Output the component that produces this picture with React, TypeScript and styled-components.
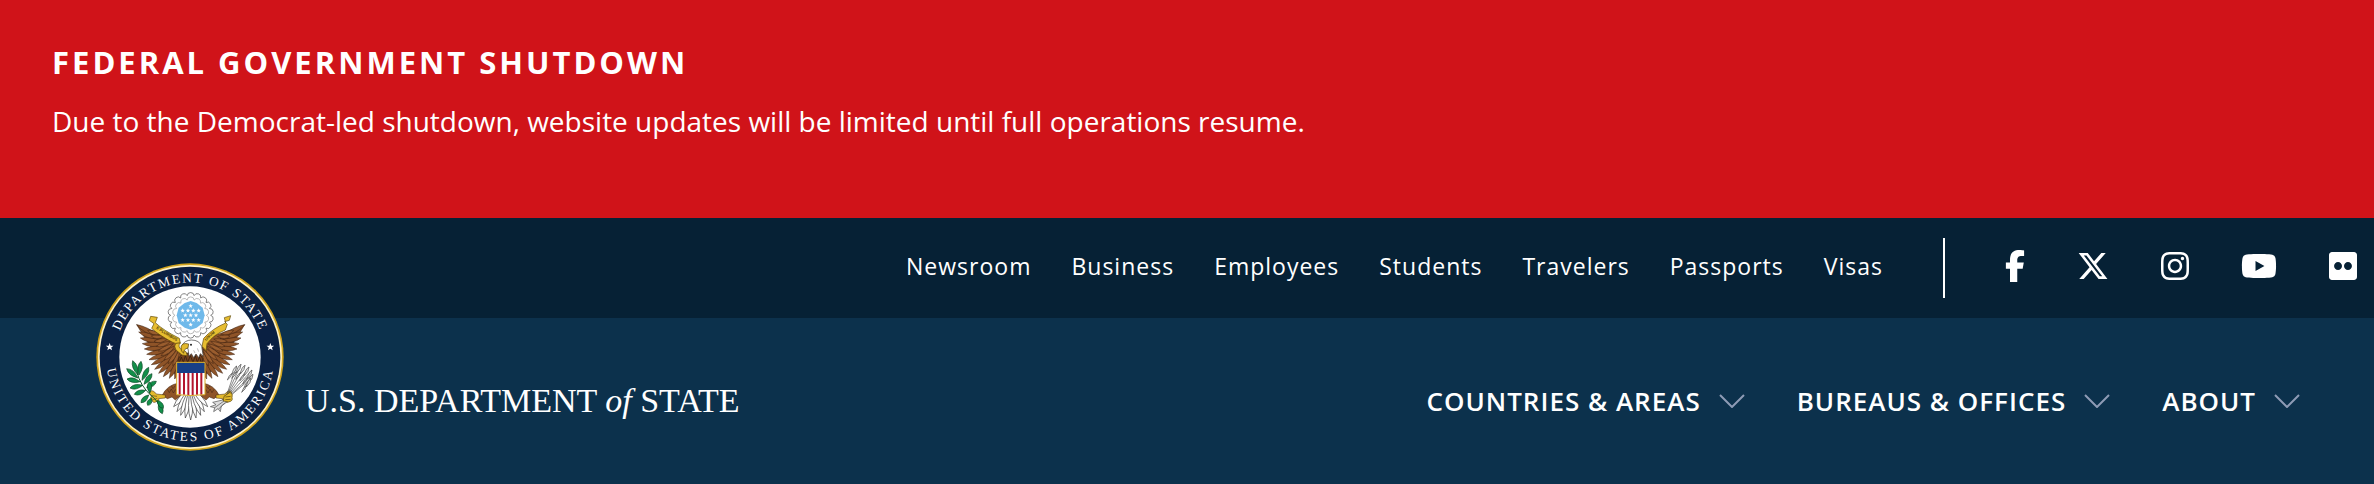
import React from "react";
import styled, { createGlobalStyle } from "styled-components";
import { FaFacebookF, FaXTwitter, FaInstagram, FaYoutube, FaFlickr } from "react-icons/fa6";

const GlobalStyle = createGlobalStyle`
  *, *::before, *::after { box-sizing: border-box; }
  body {
    margin: 0;
    background: #0c314c;
    color: #fff;
    font-family: "Open Sans", "Noto Sans", sans-serif;
  }
`;

const Alert = styled.section`
  background: #d01319;
  padding: 40px 52px 76px;
`;

const AlertTitle = styled.h2`
  margin: 0;
  font-size: 31px;
  line-height: 44px;
  font-weight: 700;
  letter-spacing: 3px;
`;

const AlertText = styled.p`
  margin: 16px 0 0;
  font-size: 28px;
  line-height: 42px;
`;

const UtilityBar = styled.div`
  display: flex;
  align-items: center;
  justify-content: flex-end;
  height: 100px;
  padding-right: 17px;
  background: #062135;
`;

const UtilityNav = styled.nav`
  display: flex;
  gap: 40px;
  padding: 0 60px 4px 0;
`;

const UtilityLink = styled.a`
  color: #fff;
  font-size: 23px;
  line-height: 36px;
  letter-spacing: 1px;
  text-decoration: none;
`;

const SocialList = styled.div`
  display: flex;
  align-items: center;
  gap: 52px;
  height: 60px;
  padding: 0 0 4px 60px;
  border-left: 2px solid #fff;
`;

const SocialLink = styled.a<{ $width: number }>`
  display: flex;
  color: #fff;

  svg {
    width: ${(p) => p.$width}px;
    height: 32px;
  }
`;

const MainBar = styled.div`
  display: flex;
  align-items: center;
  justify-content: space-between;
  min-height: 166px;
  padding: 0 74px 0 96px;
  background: #0c314c;
`;

const Brand = styled.a`
  display: flex;
  align-items: center;
  gap: 21px;
  color: #fff;
  text-decoration: none;
`;

const SealArt = styled.svg`
  display: block;
  width: 188px;
  height: 188px;
  margin: -68px 0 20px;
`;

const Wordmark = styled.span`
  font-family: "Liberation Serif", serif;
  font-size: 34px;
  line-height: 40px;
  white-space: nowrap;
`;

const MainNav = styled.nav`
  display: flex;
  gap: 52px;
`;

const MenuButton = styled.button`
  display: flex;
  align-items: center;
  gap: 18px;
  padding: 0;
  border: 0;
  background: none;
  color: #fff;
  font-family: inherit;
  font-size: 26px;
  line-height: 36px;
  font-weight: 600;
  letter-spacing: 1px;
  white-space: nowrap;
  cursor: pointer;
`;

const ChevronArt = styled.svg`
  width: 26px;
  height: 14px;
`;

const Chevron = () => (
  <ChevronArt viewBox="0 0 26 14" fill="none" stroke="#8e9bb5" strokeWidth="2" aria-hidden="true">
    <path d="M1 1 L13 13 L25 1" />
  </ChevronArt>
);

const starPath = (cx: number, cy: number, r: number) =>
  Array.from({ length: 10 }, (_, i) => {
    const a = (Math.PI / 5) * i - Math.PI / 2;
    const q = i % 2 ? r * 0.42 : r;
    return `${i ? "L" : "M"}${(cx + q * Math.cos(a)).toFixed(1)} ${(cy + q * Math.sin(a)).toFixed(1)}`;
  }).join(" ") + "Z";

const scallops = (cx: number, cy: number, r: number, n: number) => {
  const pt = (i: number) => {
    const a = (2 * Math.PI * i) / n;
    return `${(cx + r * Math.cos(a)).toFixed(1)} ${(cy + r * Math.sin(a)).toFixed(1)}`;
  };
  const c = (r * Math.PI) / n;
  return `M${pt(0)} ` + Array.from({ length: n }, (_, i) => `A${c} ${c} 0 0 1 ${pt(i + 1)}`).join(" ") + "Z";
};

// A feather or leaf that swells between its root and its pointed tip.
const blade = (x1: number, y1: number, x2: number, y2: number, w: number, bend = 0) => {
  const dx = x2 - x1;
  const dy = y2 - y1;
  const len = Math.hypot(dx, dy);
  const nx = -dy / len;
  const ny = dx / len;
  const mx = x1 + dx * 0.62;
  const my = y1 + dy * 0.62;
  return `M${x1} ${y1} Q${mx + nx * (w + bend)} ${my + ny * (w + bend)} ${x2} ${y2} Q${mx - nx * (w - bend)} ${my - ny * (w - bend)} ${x1} ${y1}Z`;
};

const wingFeathers = [
  [300, 318, 284, 384], [296, 318, 268, 382], [291, 318, 250, 377], [286, 314, 236, 367],
  [282, 310, 224, 355], [278, 305, 214, 341], [274, 299, 207, 326], [269, 293, 200, 310],
  [263, 286, 193, 294], [257, 279, 187, 278], [250, 271, 181, 261], [244, 263, 176, 243],
  [238, 255, 170, 221],
];

const coverts = [
  [300, 300, 294, 345], [298, 298, 278, 344], [295, 294, 264, 338], [291, 290, 252, 327],
  [286, 284, 243, 314], [280, 278, 235, 300], [272, 271, 229, 286], [263, 264, 222, 271],
  [252, 257, 214, 255], [242, 250, 203, 238],
];

const leaves = [
  [174, 372, 158, 329], [177, 372, 183, 331], [174, 381, 140, 353], [180, 392, 141, 384],
  [186, 388, 206, 349], [188, 403, 150, 411], [192, 400, 216, 368], [197, 418, 163, 430],
  [200, 410, 229, 391], [206, 432, 183, 455], [209, 426, 208, 392], [215, 442, 203, 463],
  [236, 458, 247, 488], [232, 448, 250, 472],
];

const arrows = [
  [470, 345], [483, 340], [495, 343], [507, 348], [516, 357], [519, 370], [513, 382],
];

const tailTips = [
  [281, 467], [291, 482], [302, 493], [316, 501], [332, 507], [348, 501], [362, 493], [373, 482], [383, 467],
];

const unionStars = [
  [332, 165], [308, 179], [324, 179], [340, 179], [356, 179], [316, 193], [332, 193],
  [348, 193], [308, 207], [324, 207], [340, 207], [356, 207], [332, 221],
];

const EagleHalf = () => (
  <g stroke="#3a2110" strokeWidth="1.5" strokeLinejoin="round">
    <path d="M170 221 Q218 240 252 250 Q296 266 310 322 L306 372 Q280 372 254 348 Q218 300 170 221Z" fill="#8f5428" />
    {wingFeathers.map(([a, b, c, d], i) => <path key={i} d={blade(a, b, c, d, 13, -3)} fill="#8f5428" />)}
    {coverts.map(([a, b, c, d], i) => <path key={i} d={blade(a, b, c, d, 11, -3)} fill="#9a5d2e" />)}
    <path d="M296 396 Q262 402 247 432 L262 443 L276 438 L286 447 L304 432Z" fill="#8f5428" />
    <path d="M262 415 l6 10 l6 -11 l6 12 l7 -11 M274 404 l5 9 l7 -9" fill="none" />
    <path d="M256 432 L229 429 Q218 414 210 422 Q205 431 215 434 Q207 443 216 448 Q219 458 229 452 Q240 456 236 443 L256 441Z" fill="#e3b92c" />
    <path d="M215 434 L231 436 M217 447 L232 442" fill="none" />
  </g>
);

const Seal = () => (
  <SealArt viewBox="48 36 564 564" role="img" aria-label="Seal of the Department of State">
    <defs>
      <path id="ring-top" d="M106 318 A224 224 0 0 1 554 318" />
      <path id="ring-bottom" d="M78 318 A252 252 0 0 0 582 318" />
      <path id="motto-left" d="M228 232 Q252 250 294 272" />
      <path id="motto-right" d="M379 270 Q398 248 424 234" />
    </defs>
    <circle cx="330" cy="318" r="281" fill="#d2a51e" />
    <circle cx="330" cy="318" r="276" fill="#fff3c4" />
    <circle cx="330" cy="318" r="271" fill="#0a2042" />
    <circle cx="330" cy="318" r="212" fill="#fff" />
    <g fill="#fff" fontFamily="Liberation Serif, serif" fontSize="40" textAnchor="middle">
      <text letterSpacing="5"><textPath href="#ring-top" startOffset="50%">DEPARTMENT OF STATE</textPath></text>
      <text letterSpacing="7"><textPath href="#ring-bottom" startOffset="50%">UNITED STATES OF AMERICA</textPath></text>
    </g>
    <path d={starPath(89, 288, 12) + starPath(571, 288, 12)} fill="#fff" />

    <g fill="#fff" stroke="#4a4a4a" strokeWidth="2">
      <path d={scallops(332, 193, 60, 18)} />
      <path d={scallops(332, 193, 47, 14)} stroke="#999" />
    </g>
    <path d="M332 150 L350 156 L368 170 L374 193 L368 216 L350 230 L332 236 L314 230 L296 216 L290 193 L296 170 L314 156Z" fill="#6fb9ea" />
    <path d={unionStars.map(([x, y]) => starPath(x, y, 7)).join("")} fill="#fff" />

    <g fill="#fff" stroke="#333" strokeWidth="2">
      {tailTips.map(([x, y], i) => <path key={i} d={blade(332, 408, x, y, 13)} />)}
    </g>
    <EagleHalf />
    <g transform="translate(664 0) scale(-1 1)"><EagleHalf /></g>

    <path d="M296 322 Q304 304 332 306 Q360 304 368 322 L368 345 L296 345Z" fill="#74401d" stroke="#24160c" strokeWidth="2" />
    <path d="M298 334 l6 -16 l6 16 l6 -20 l7 20 l8 -20 l8 20 l7 -20 l6 20 l6 -16 l6 16" fill="none" stroke="#24160c" strokeWidth="2" />

    <g fill="#e6bd30" stroke="#5d4708" strokeWidth="2" strokeLinejoin="round">
      <path d="M212 196 L232 199 L226 215 Q250 238 298 262 L301 276 Q286 280 278 274 Q236 252 215 232 L222 218 L208 208Z" />
      <path d="M301 276 Q292 285 303 295 L318 302 L322 314 L306 312 L288 297 Q280 284 288 277Z" />
      <path d="M452 194 L433 200 L437 216 Q398 232 371 262 L366 286 L378 299 L381 278 Q402 250 436 237 L442 220 L434 212 L448 208Z" />
    </g>
    <g fill="#4f3c08" fontFamily="Liberation Sans, sans-serif" fontSize="12" fontWeight="700">
      <text><textPath href="#motto-left">E PLURIBUS</textPath></text>
      <text><textPath href="#motto-right">UNUM</textPath></text>
    </g>

    <path d="M307 282 Q314 268 334 267 Q358 267 365 286 L370 316 L361 308 L356 320 L348 309 L341 320 L334 308 L327 316 L324 292Z" fill="#fff" stroke="#333" strokeWidth="2" />
    <path d="M326 279 Q306 274 303 288 Q302 302 311 307 Q310 294 324 291Z" fill="#e3b92c" stroke="#4f3c08" strokeWidth="2" />
    <circle cx="333" cy="281" r="3" fill="#222" />
    <path d="M341 298 l4 8 M352 292 l4 10" stroke="#999" strokeWidth="2" />

    <path d="M290 334 H375 V431 Q332 436 290 431Z" fill="#fff" />
    <path d="M299 365 V431 M312 365 V431 M325 365 V432 M338 365 V432 M351 365 V431 M364 365 V431" stroke="#b3152d" strokeWidth="6" />
    <path d="M290 334 H375 V366 H290Z" fill="#173f87" />
    <path d="M290 334 H375 V431 Q332 436 290 431Z" fill="none" stroke="#d9ac25" strokeWidth="3" />

    <path d="M170 360 Q180 405 216 436 Q234 448 244 482" fill="none" stroke="#0d5c2a" strokeWidth="3" />
    <g fill="#12904a" stroke="#0b4523" strokeWidth="2">
      {leaves.map(([a, b, c, d], i) => <path key={i} d={blade(a, b, c, d, 13)} />)}
    </g>

    <g stroke="#4d4d4d" strokeWidth="2" fill="#ddd">
      {arrows.map(([x, y], i) => (
        <g key={i}>
          <path d={`M440 ${432 + i * 2} L${x} ${y}`} fill="none" />
          <path d={blade(x - 14, y + 26, x, y, 7)} />
          <path d={blade(x - 28, y + 42, x - 14, y + 22, 5)} />
        </g>
      ))}
      <path d="M436 445 L398 454 L408 461 L391 467 L404 470 L401 482 L414 473 L421 482 L424 465 L442 452Z" />
      <path d="M432 450 L404 470 M436 454 L416 474" fill="none" />
    </g>
    <path d="M450 424 Q460 430 456 440 Q460 450 445 453 L430 450 L432 436Z" fill="#e3b92c" stroke="#4f3c08" strokeWidth="2" />
    <path d="M436 438 L452 436 M436 446 L452 445" stroke="#4f3c08" strokeWidth="2" />
  </SealArt>
);

const utilityLinks = ["Newsroom", "Business", "Employees", "Students", "Travelers", "Passports", "Visas"];

const socialLinks = [
  { label: "Facebook", Icon: FaFacebookF, width: 20 },
  { label: "X", Icon: FaXTwitter, width: 32 },
  { label: "Instagram", Icon: FaInstagram, width: 28 },
  { label: "YouTube", Icon: FaYoutube, width: 36 },
  { label: "Flickr", Icon: FaFlickr, width: 28 },
];

const menus = ["COUNTRIES & AREAS", "BUREAUS & OFFICES", "ABOUT"];

export default function App() {
  return (
    <>
      <GlobalStyle />
      <Alert>
        <AlertTitle>FEDERAL GOVERNMENT SHUTDOWN</AlertTitle>
        <AlertText>
          Due to the Democrat-led shutdown, website updates will be limited until full operations resume.
        </AlertText>
      </Alert>
      <header>
        <UtilityBar>
          <UtilityNav aria-label="Utility">
            {utilityLinks.map((label) => (
              <UtilityLink key={label} href="#">{label}</UtilityLink>
            ))}
          </UtilityNav>
          <SocialList>
            {socialLinks.map(({ label, Icon, width }) => (
              <SocialLink key={label} href="#" aria-label={label} $width={width}>
                <Icon />
              </SocialLink>
            ))}
          </SocialList>
        </UtilityBar>
        <MainBar>
          <Brand href="#">
            <Seal />
            <Wordmark>U.S. DEPARTMENT <em>of</em> STATE</Wordmark>
          </Brand>
          <MainNav aria-label="Main">
            {menus.map((label) => (
              <MenuButton key={label} type="button">
                {label}
                <Chevron />
              </MenuButton>
            ))}
          </MainNav>
        </MainBar>
      </header>
    </>
  );
}
